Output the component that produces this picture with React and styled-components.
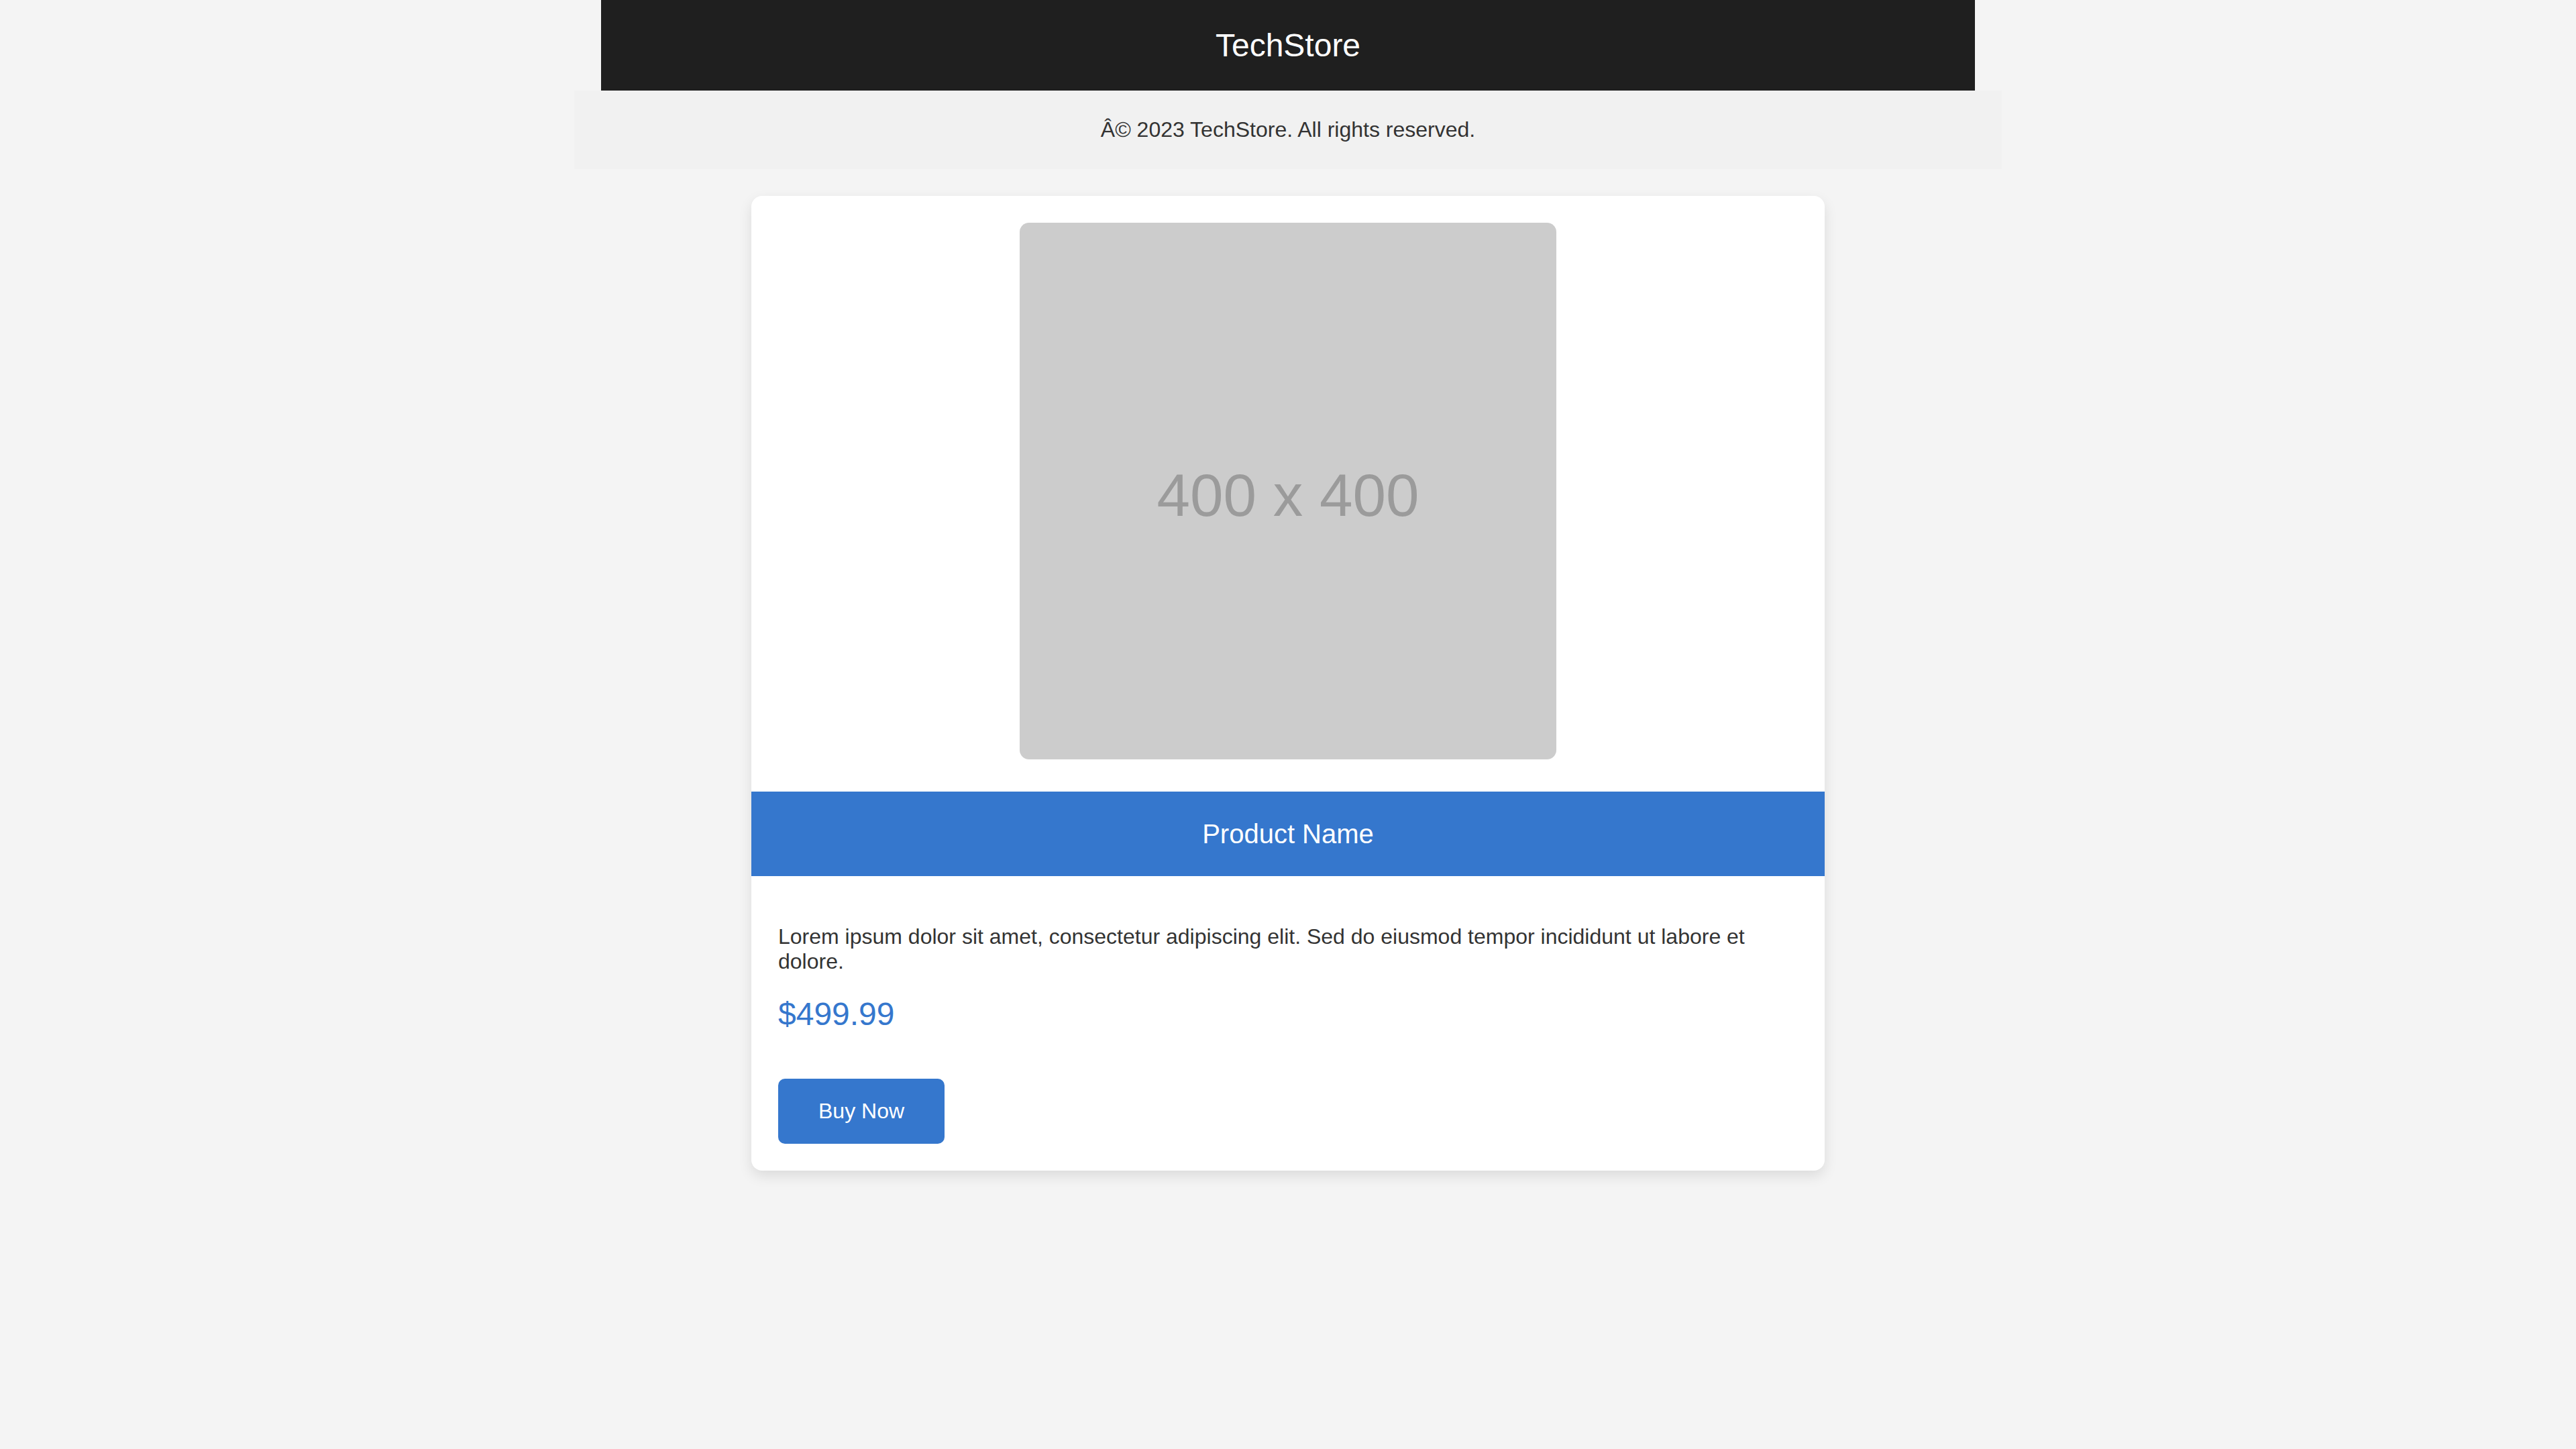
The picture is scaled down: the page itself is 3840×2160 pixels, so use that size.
import React from 'react';
import styled, {createGlobalStyle} from 'styled-components';

const GlobalStyle = createGlobalStyle`
  html, body { margin: 0; padding: 0; }
  body { background: #f4f4f4; font-family: "Liberation Sans", Arial, sans-serif; color: #333; }
  * { box-sizing: border-box; }
`;

const Page = styled.div`display: flex; flex-direction: column; align-items: center; min-height: 2160px;`;
const Header = styled.header`width: 2048px; background: #1f1f1f; padding: 40px 0; text-align: center;`;
const Title = styled.h1`margin: 0; font-size: 48px; font-weight: 400; line-height: 55px; color: #fff;`;
const Footer = styled.footer`width: 2128px; background: #f1f1f1; padding: 40px; text-align: center;`;
const FooterText = styled.p`margin: 0; font-size: 32px; line-height: 37px; color: #333;`;

const Card = styled.div`
  width: 1600px; margin-top: 40px; background: #fff; border-radius: 16px;
  box-shadow: 0 8px 20px rgba(0, 0, 0, 0.1); overflow: hidden;
`;
const ImageWrap = styled.div`display: flex; justify-content: center; padding: 40px 40px 48px;`;
const Placeholder = styled.div`
  width: 800px; height: 800px; border-radius: 14px; background: #cccccc;
  display: flex; align-items: center; justify-content: center;
  font-size: 89px; color: #9b9b9b; padding-top: 12px;
`;
const NameBar = styled.h2`
  margin: 0; background: #3577cd; color: #fff; text-align: center;
  font-size: 40px; font-weight: 400; line-height: 46px; padding: 40px 0;
`;
const Body = styled.div`padding: 40px 40px 40px;`;
const Description = styled.p`margin: 32px 0 0; font-size: 32px; line-height: 37px; color: #333;`;
const Price = styled.p`margin: 32px 0 0; font-size: 48px; line-height: 55px; color: #3577cd;`;
const BuyButton = styled.button`
  display: block; margin-top: 69px; padding: 30px 60px; border: none; border-radius: 10px;
  background: #3577cd; color: #fff; font-family: inherit; font-size: 32px; line-height: 37px; cursor: pointer;
`;

export default function App() {
  return (
    <Page>
      <GlobalStyle />
      <Header>
        <Title>TechStore</Title>
      </Header>
      <Footer>
        <FooterText>Â© 2023 TechStore. All rights reserved.</FooterText>
      </Footer>
      <Card>
        <ImageWrap>
          <Placeholder>400 x 400</Placeholder>
        </ImageWrap>
        <NameBar>Product Name</NameBar>
        <Body>
          <Description>
            Lorem ipsum dolor sit amet, consectetur adipiscing elit. Sed do eiusmod tempor incididunt ut labore et dolore.
          </Description>
          <Price>$499.99</Price>
          <BuyButton>Buy Now</BuyButton>
        </Body>
      </Card>
    </Page>
  );
}
